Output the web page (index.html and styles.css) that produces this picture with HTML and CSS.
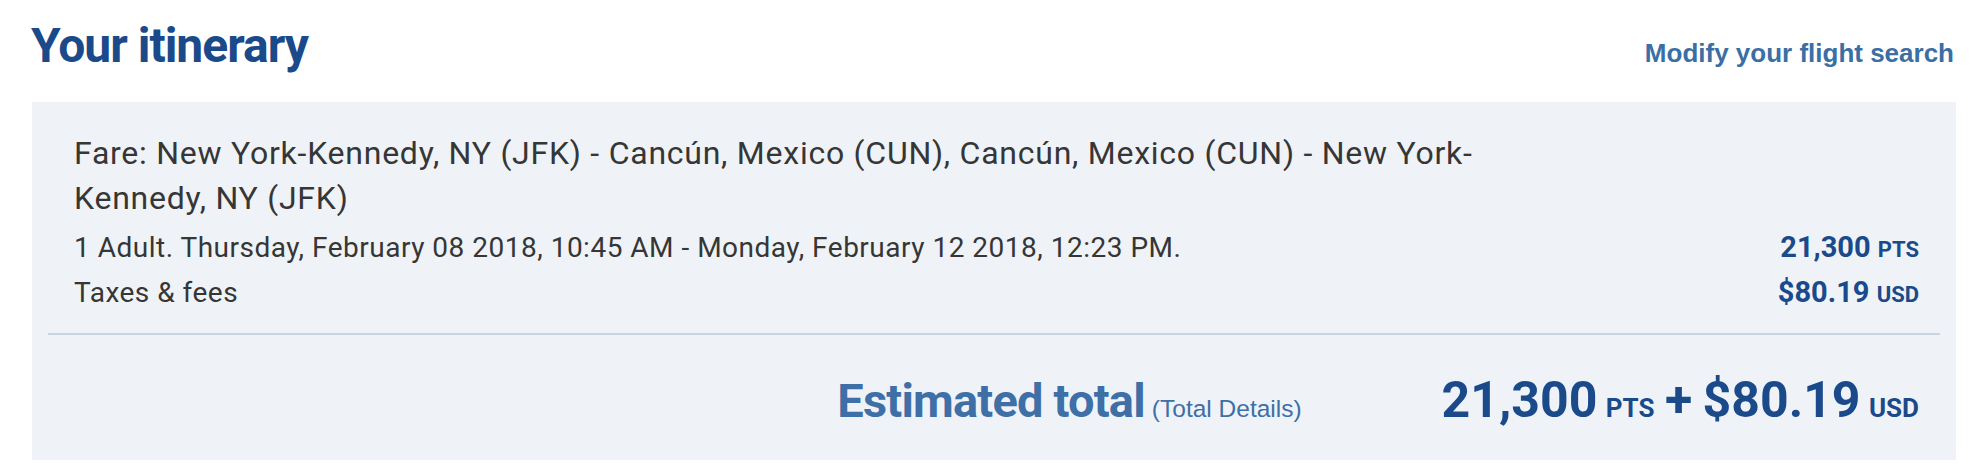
FILE: index.html
```html
<!DOCTYPE html>
<html lang="en">
<head>
<meta charset="utf-8">
<title>Your itinerary</title>
<link rel="stylesheet" href="styles.css">
</head>
<body>
<div class="page">
  <header class="head">
    <h1 class="title">Your itinerary</h1>
    <a class="modify" href="#">Modify your flight search</a>
  </header>
  <section class="panel">
    <div class="items">
      <p class="fare">Fare: New York-Kennedy, NY (JFK) - Cancún, Mexico (CUN), Cancún, Mexico (CUN) - New York-Kennedy, NY (JFK)</p>
      <div class="lines">
        <div class="line">
          <span class="desc">1 Adult. Thursday, February 08 2018, 10:45 AM - Monday, February 12 2018, 12:23 PM.</span>
          <span class="amt">21,300 <span class="unit">PTS</span></span>
        </div>
        <div class="line">
          <span class="desc">Taxes &amp; fees</span>
          <span class="amt">$80.19 <span class="unit">USD</span></span>
        </div>
      </div>
    </div>
    <div class="total">
      <div class="total-label">
        <span class="est">Estimated total</span><a class="details" href="#">(Total Details)</a>
      </div>
      <div class="total-amt">21,300 <span class="unit-lg">PTS</span> <span class="plus">+</span> $80.19 <span class="unit-lg">USD</span></div>
    </div>
  </section>
</div>
</body>
</html>
```

FILE: styles.css
```css
* { box-sizing: border-box; }

body {
  margin: 0;
  background: #ffffff;
  font-family: Roboto, "Liberation Sans", Arial, sans-serif;
  color: #363636;
}

.page {
  width: 1974px;
  padding: 0 18px 0 32px;
}

.head {
  display: flex;
  justify-content: space-between;
  align-items: baseline;
  padding: 22px 0 32px;
}

.title {
  margin: 0 0 0 -1px;
  font-size: 48px;
  line-height: 48px;
  font-weight: 700;
  color: #1b4a8b;
  letter-spacing: -1px;
}

.modify {
  font-family: "Liberation Sans", Arial, sans-serif;
  font-weight: 700;
  font-size: 26px;
  color: #3b6ea5;
  text-decoration: none;
  margin-right: 2px;
}

.panel {
  background: #eff3f7;
  padding: 29px 16px 31px;
}

.items {
  padding: 0 21px 18px 26px;
  border-bottom: 2px solid #cad4de;
}

.fare {
  margin: 0;
  max-width: 1460px;
  font-size: 32px;
  line-height: 45px;
  letter-spacing: 0.75px;
}

.lines {
  margin-top: 4px;
}

.line {
  display: flex;
  justify-content: space-between;
  align-items: baseline;
  font-size: 28px;
  line-height: 44px;
}

.desc {
  letter-spacing: 0.5px;
}

.amt {
  font-weight: 700;
  font-size: 29px;
  line-height: 44px;
  color: #1b4a8b;
}

.unit {
  font-size: 22px;
  line-height: 1;
}

.total {
  display: flex;
  justify-content: flex-end;
  align-items: baseline;
  gap: 140px;
  margin-top: 37px;
  padding-right: 21px;
  line-height: 56px;
}

.total-label {
  display: flex;
  align-items: baseline;
}

.est {
  font-size: 47px;
  font-weight: 700;
  letter-spacing: -0.8px;
  color: #3e6fa6;
}

.details {
  margin-left: 7px;
  font-family: "Liberation Sans", Arial, sans-serif;
  font-size: 24.5px;
  line-height: 1;
  color: #3e6fa6;
  text-decoration: none;
}

.total-amt {
  font-size: 50px;
  font-weight: 700;
  word-spacing: -4px;
  color: #1b4a8b;
}

.plus {
  margin: 0 2px;
}

.unit-lg {
  font-size: 26px;
  line-height: 1;
}
```
